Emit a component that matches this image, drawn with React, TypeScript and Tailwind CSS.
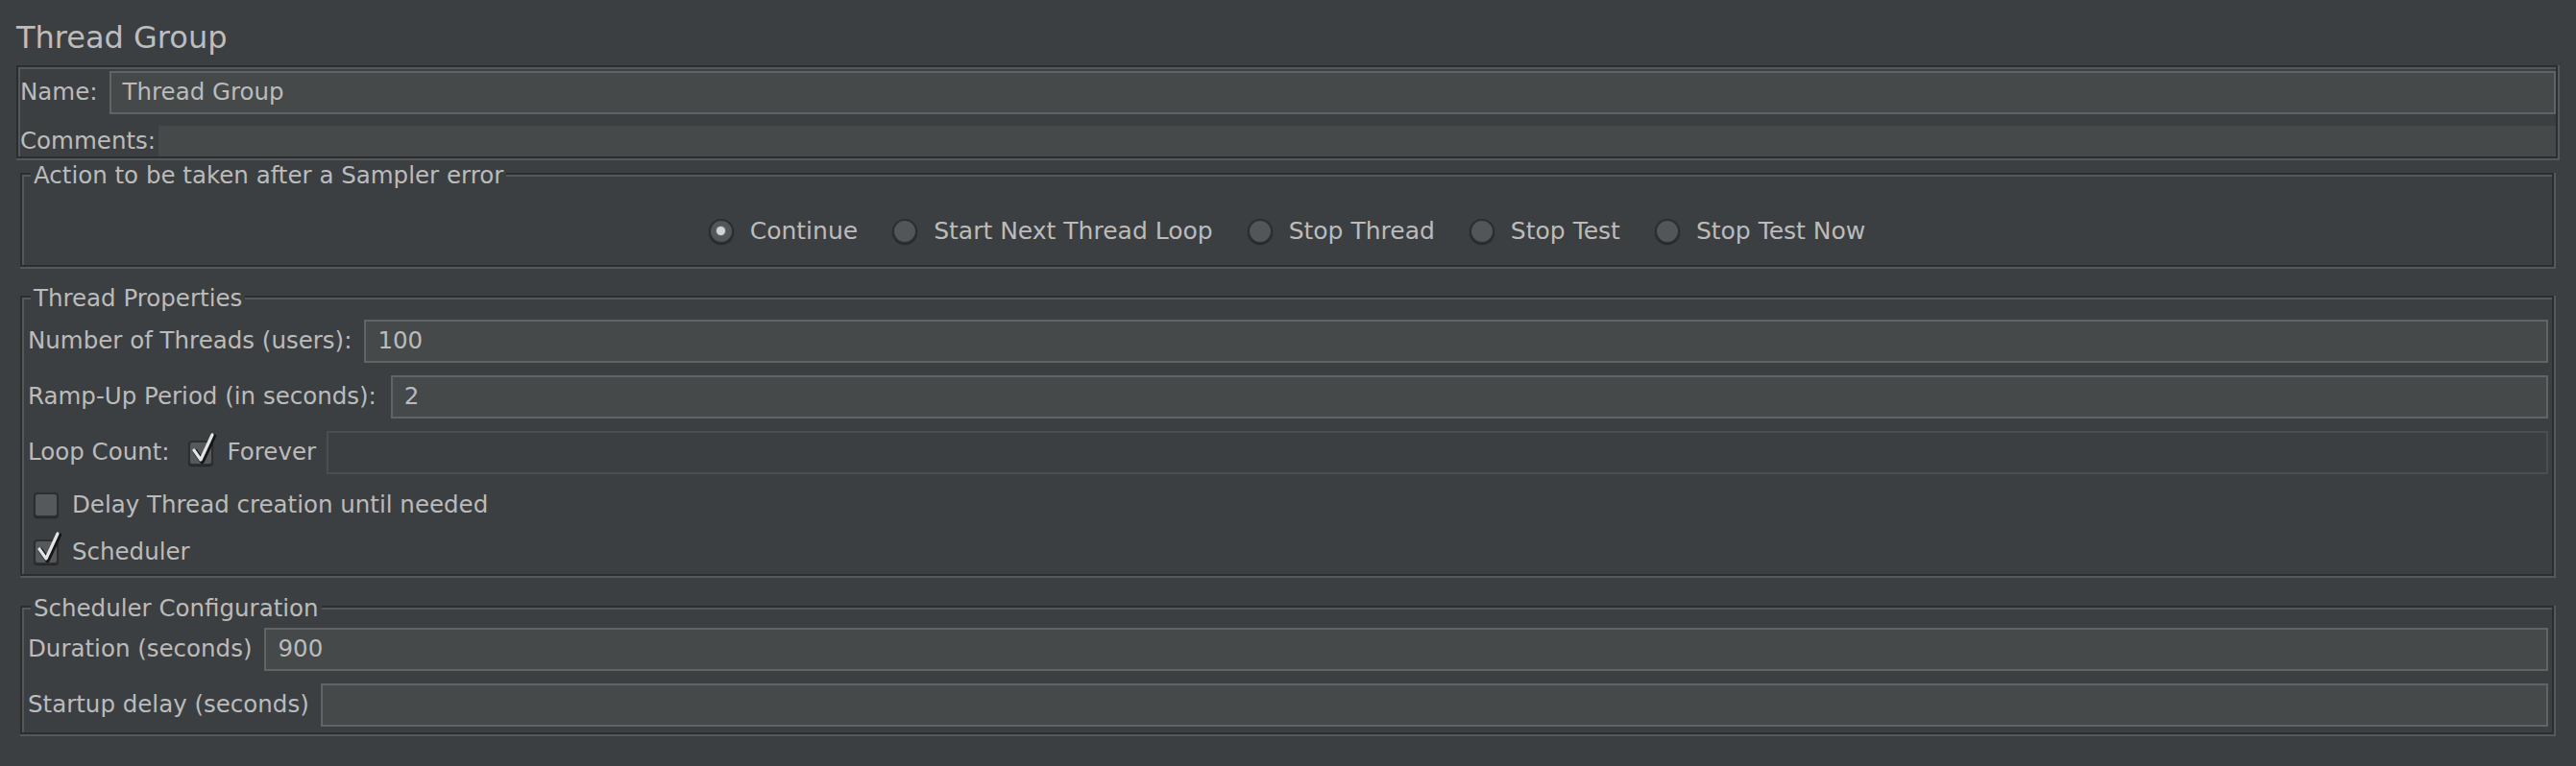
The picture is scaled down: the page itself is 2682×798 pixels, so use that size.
import React from 'react'

function Etched({ title, className, children }: { title?: string; className?: string; children: React.ReactNode }) {
  return (
    <div className={'border-r-2 border-b-2 border-[#55585a] ' + (className ?? '')}>
      <div className="relative border-2 border-[#2b2d2e] shadow-[inset_2px_2px_0_#55585a]">
        {title && (
          <span className="absolute -top-[13px] left-[9px] bg-[#3c3f41] px-[3px] leading-[28px] whitespace-nowrap">
            {title}
          </span>
        )}
        {children}
      </div>
    </div>
  )
}

function Field({ value, disabled }: { value?: string; disabled?: boolean }) {
  return (
    <div
      className={
        disabled
          ? 'flex h-[45px] flex-1 items-center border-2 border-[#4b4e50] bg-[#3c3f41] pl-[12px]'
          : 'flex h-[45px] flex-1 items-center border-2 border-[#616365] bg-[#45494a] pl-[12px]'
      }
    >
      {value}
    </div>
  )
}

function Radio({ label, checked }: { label: string; checked?: boolean }) {
  return (
    <div className="flex items-center gap-[17px]">
      <div className="flex h-[26px] w-[26px] items-center justify-center rounded-full border-2 border-[#2c2e30] bg-[#525658] shadow-[0_1px_1px_rgba(0,0,0,0.45)]">
        {checked && <div className="h-[9px] w-[9px] rounded-full bg-[#d4d4d4] shadow-[0_0_0_1px_#6b6e70]" />}
      </div>
      <span className="whitespace-nowrap">{label}</span>
    </div>
  )
}

function Checkbox({ checked }: { checked?: boolean }) {
  return (
    <div className="relative h-[26px] w-[26px] shrink-0 rounded-[4px] border-2 border-[#2c2e30] bg-[#55595b] shadow-[0_1px_1px_rgba(0,0,0,0.45)]">
      {checked && (
        <svg className="absolute -top-[10px] left-[0px] overflow-visible" width="26" height="32" viewBox="0 0 26 32">
          <path d="M4 18 L11 28 L23 2" fill="none" stroke="#151617" strokeWidth="5" strokeLinejoin="round" strokeLinecap="round" transform="translate(1.5 1.5)" />
          <path d="M4 18 L11 28 L23 2" fill="none" stroke="#e4e4e4" strokeWidth="3.2" strokeLinejoin="round" strokeLinecap="round" />
        </svg>
      )}
    </div>
  )
}

export default function App() {
  return (
    <div className="h-[798px] w-full bg-[#3c3f41] px-[17px] font-['DejaVu_Sans',sans-serif] text-[24.5px] text-[#bbbbbb]">
      <div className="pt-[19px] text-[32px] leading-[40px] text-[#bdbdbd]">Thread Group</div>

      {/* name + comments */}
      <Etched className="mt-[9px]">
        <div className="pl-[2px]">
          <div className="mt-[4px] flex items-center">
            <span className="mr-[12px]">Name:</span>
            <Field value="Thread Group" />
          </div>
          <div className="mt-[12px] flex h-[32px] items-center">
            <span>Comments:</span>
            <div className="ml-[3px] h-full flex-1 bg-[#45494a]" />
          </div>
        </div>
      </Etched>

      <div className="px-[4px]">
        <Etched title="Action to be taken after a Sampler error" className="mt-[13px]">
          <div className="flex h-[94px] items-start justify-center gap-[36px] pt-[40px] text-[25px]">
            <Radio label="Continue" checked />
            <Radio label="Start Next Thread Loop" />
            <Radio label="Stop Thread" />
            <Radio label="Stop Test" />
            <Radio label="Stop Test Now" />
          </div>
        </Etched>

        <Etched title="Thread Properties" className="mt-[28px]">
          <div className="flex flex-col pt-[23px] pr-[4px] pb-[9px] pl-[6px]">
            <div className="flex items-center">
              <span className="mr-[13px] whitespace-nowrap">Number of Threads (users):</span>
              <Field value="100" />
            </div>
            <div className="mt-[13px] flex items-center">
              <span className="mr-[15px] whitespace-nowrap">Ramp-Up Period (in seconds):</span>
              <Field value="2" />
            </div>
            <div className="mt-[13px] flex items-center">
              <span className="mr-[19px] whitespace-nowrap">Loop Count:</span>
              <Checkbox checked />
              <span className="mr-[11px] ml-[15px]">Forever</span>
              <Field disabled />
            </div>
            <div className="mt-[18px] flex h-[28px] items-center gap-[14px] pl-[6px]">
              <Checkbox />
              <span>Delay Thread creation until needed</span>
            </div>
            <div className="mt-[21px] flex h-[28px] items-center gap-[14px] pl-[6px]">
              <Checkbox checked />
              <span>Scheduler</span>
            </div>
          </div>
        </Etched>

        <Etched title="Scheduler Configuration" className="mt-[29px]">
          <div className="flex flex-col pt-[21px] pr-[4px] pb-[6px] pl-[6px]">
            <div className="flex items-center">
              <span className="mr-[13px] whitespace-nowrap">Duration (seconds)</span>
              <Field value="900" />
            </div>
            <div className="mt-[13px] flex items-center">
              <span className="mr-[12px] whitespace-nowrap">Startup delay (seconds)</span>
              <Field />
            </div>
          </div>
        </Etched>
      </div>
    </div>
  )
}
